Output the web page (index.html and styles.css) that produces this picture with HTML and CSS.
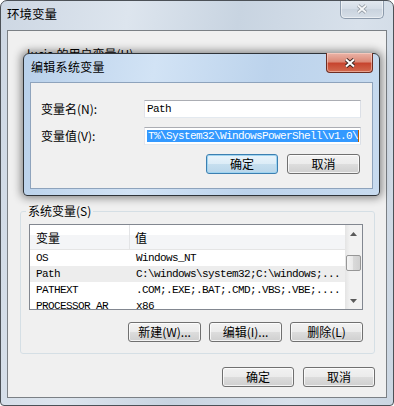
FILE: index.html
```html
<!DOCTYPE html>
<html lang="zh-CN">
<head>
  <meta charset="UTF-8">
  <title>环境变量</title>
  <link rel="stylesheet" href="styles.css">
</head>
<body>
  <div class="window">
    <div class="titlebar">
      <span class="title">环境变量</span>
      <span class="close">
        <svg width="12" height="10" viewBox="0 0 12 10"><path d="M2 1.5L10 8.5M10 1.5L2 8.5" stroke="#8b939c" stroke-width="3.6"/><path d="M2 1.5L10 8.5M10 1.5L2 8.5" stroke="#f4f6f8" stroke-width="2"/></svg>
      </span>
    </div>

    <div class="client">
      <div class="user-area">
        <div class="user-label">lucia 的用户变量(U)</div>
      </div>

      <fieldset class="group">
        <legend>系统变量(S)</legend>
        <div class="list">
          <div class="table">
            <div class="head">
              <div class="c1">变量</div>
              <div class="c2">值</div>
            </div>
            <div class="row"><div class="c1">OS</div><div class="c2">Windows_NT</div></div>
            <div class="row selected"><div class="c1">Path</div><div class="c2">C:\windows\system32;C:\windows;...</div></div>
            <div class="row"><div class="c1">PATHEXT</div><div class="c2">.COM;.EXE;.BAT;.CMD;.VBS;.VBE;....</div></div>
            <div class="row"><div class="c1">PROCESSOR_AR</div><div class="c2">x86</div></div>
          </div>
          <div class="scrollbar">
            <div class="arrow"><svg width="7" height="4" viewBox="0 0 7 4"><path d="M0 4L3.5 0L7 4Z" fill="#5a5a5a"/></svg></div>
            <div class="track"><div class="thumb"></div></div>
            <div class="arrow"><svg width="7" height="4" viewBox="0 0 7 4"><path d="M0 0L3.5 4L7 0Z" fill="#5a5a5a"/></svg></div>
          </div>
        </div>
        <div class="actions">
          <button class="btn">新建(W)...</button>
          <button class="btn">编辑(I)...</button>
          <button class="btn">删除(L)</button>
        </div>
      </fieldset>

      <div class="actions bottom">
        <button class="btn">确定</button>
        <button class="btn">取消</button>
      </div>
    </div>

    <!-- modal edit dialog over the main window -->
    <div class="dialog">
      <div class="titlebar dlg-titlebar">
        <span class="title dlg-title">编辑系统变量</span>
        <span class="close close-red">
          <svg width="12" height="10" viewBox="0 0 12 10"><path d="M2 1.5L10 8.5M10 1.5L2 8.5" stroke="#3a2420" stroke-width="3.8"/><path d="M2 1.5L10 8.5M10 1.5L2 8.5" stroke="#ffffff" stroke-width="2.1"/></svg>
        </span>
      </div>
      <div class="dlg-client">
        <div class="field">
          <label class="field-label">变量名(N):</label>
          <div class="input">Path</div>
        </div>
        <div class="field">
          <label class="field-label">变量值(V):</label>
          <div class="input"><span class="sel">T%\System32\WindowsPowerShell\v1.0\</span></div>
        </div>
        <div class="actions dlg-actions">
          <button class="btn default">确定</button>
          <button class="btn">取消</button>
        </div>
      </div>
    </div>
  </div>
</body>
</html>
```

FILE: styles.css
```css
* {
  box-sizing: border-box;
}
body {
  margin: 0;
  font-family: "Noto Sans CJK SC", sans-serif;
  font-size: 12px;
  color: #000;
}
.window {
  position: relative;
  width: 394px;
  height: 406px;
  border: 1px solid #4c5157;
  border-radius: 7px 7px 4px 4px;
  padding: 0 6px 7px 6px;
  display: flex;
  flex-direction: column;
  overflow: hidden;
  background: linear-gradient(100deg, #cdd7e3 0%, #dde5ee 28%, #c8d4e1 52%, #d8e1eb 78%, #cbd6e2 100%);
}
.titlebar {
  height: 29px;
  display: flex;
  align-items: flex-start;
  flex-shrink: 0;
}
.title {
  margin: 5px 0 0 0;
  font-size: 12.5px;
  line-height: 16px;
}
.close {
  margin: -1px 3px 0 auto;
  width: 44px;
  height: 19px;
  border: 1px solid #8c9aab;
  border-top: none;
  border-radius: 0 0 5px 5px;
  background: linear-gradient(#e3e9f0, #d3dce6 50%, #c9d3de 50%, #d6dee7);
  box-shadow: inset 0 0 0 1px rgba(255, 255, 255, 0.5);
  display: flex;
  align-items: center;
  justify-content: center;
}
.client {
  flex: 1;
  border: 1px solid #7b8085;
  background: #f0f0f0;
  display: flex;
  flex-direction: column;
  padding: 0 11px 10px 12px;
}
.user-area {
  height: 173px;
  padding: 16px 0 0 7px;
  flex-shrink: 0;
}
.user-label {
  line-height: 14px;
}
.group {
  margin: 0;
  min-width: 0;
  border: 1px solid #d5dfe5;
  border-radius: 3px;
  padding: 0 11px 11px 8px;
}
.group legend {
  padding: 0 2px;
  margin-left: -3px;
  line-height: 14px;
  font-size: 12px;
}
.list {
  margin-top: 6px;
  height: 86px;
  border: 1px solid #828790;
  background: #fff;
  display: flex;
}
.table {
  flex: 1;
  overflow: hidden;
}
.head {
  height: 25px;
  display: flex;
  border-bottom: 1px solid #e5e5e5;
  background: linear-gradient(#ffffff 0 42%, #f4f5f7 42%);
}
.head .c1 {
  width: 100px;
  padding: 6px 0 0 6px;
  border-right: 1px solid #e3e4e6;
  line-height: 14px;
}
.head .c2 {
  padding: 6px 0 0 5px;
  line-height: 14px;
}
.row {
  height: 16px;
  display: flex;
  font-family: "Liberation Mono", monospace;
  font-size: 11px;
  letter-spacing: -0.6px;
  line-height: 16px;
  white-space: nowrap;
}
.row .c1 {
  width: 100px;
  padding-left: 6px;
  overflow: hidden;
}
.row .c2 {
  padding-left: 6px;
}
.row.selected {
  background: #ededed;
}
.scrollbar {
  width: 17px;
  display: flex;
  flex-direction: column;
  background: linear-gradient(to right, #e4e4e4, #f2f2f2 30%, #f2f2f2);
}
.arrow {
  height: 17px;
  display: flex;
  align-items: center;
  justify-content: center;
}
.track {
  flex: 1;
}
.thumb {
  margin: 13px 0 0 1px;
  width: 15px;
  height: 16px;
  border: 1px solid #979797;
  border-radius: 2px;
  background: linear-gradient(to right, #f4f4f4, #e8e8e8 50%, #d9d9d9 50%, #d0d0d0);
}
.actions {
  display: flex;
  justify-content: flex-end;
  gap: 8px;
  margin-top: 12px;
}
.actions.bottom {
  margin-top: 13px;
  gap: 9px;
}
.actions.bottom .btn {
  width: 72px;
}
.btn {
  width: 73px;
  height: 20px;
  padding: 0;
  border: 1px solid #707070;
  border-radius: 3px;
  background: linear-gradient(#f2f2f2, #ebebeb 50%, #dddddd 50%, #cfcfcf);
  box-shadow: inset 0 0 0 1px rgba(255, 255, 255, 0.75);
  font-family: "Noto Sans CJK SC", sans-serif;
  font-size: 12px;
  line-height: 18px;
  color: #000;
  text-align: center;
}
.btn.default {
  border-color: #3c7fb1;
  background: linear-gradient(#eaf4fb, #dbecf7 50%, #c6dfef 50%, #b9d6ea);
  box-shadow: inset 0 0 0 1px #9fd4f0;
}
.dialog {
  position: absolute;
  left: 22px;
  top: 52px;
  width: 357px;
  height: 143px;
  border: 1px solid #2f3439;
  border-radius: 6px 6px 4px 4px;
  padding: 0 6px 6px 6px;
  display: flex;
  flex-direction: column;
  background: linear-gradient(100deg, #b8d0ea 0%, #d2e3f5 35%, #bcd3ec 65%, #c8dbef 100%);
  box-shadow: 0 0 9px 2px rgba(0, 0, 0, 0.45);
}
.dlg-titlebar {
  height: 28px;
}
.dlg-title {
  margin: 5px 0 0 1px;
  font-size: 12px;
  letter-spacing: 0.3px;
}
.close-red {
  margin: -1px 0 0 auto;
  width: 47px;
  height: 20px;
  border: 1px solid #6e2d22;
  border-top: none;
  border-radius: 0 0 4px 4px;
  background: linear-gradient(#eab4a8, #dc8a78 45%, #c7452f 55%, #d26a4f);
  box-shadow: inset 0 0 0 1px rgba(255, 220, 210, 0.5);
}
.dlg-client {
  flex: 1;
  border: 1px solid #8ea3bc;
  background: #f0f0f0;
  padding: 17px 11px 0 10px;
}
.field {
  display: flex;
  align-items: center;
  height: 18px;
  margin-bottom: 9px;
}
.field-label {
  width: 103px;
  line-height: 16px;
}
.input {
  flex: 1;
  height: 18px;
  border: 1px solid;
  border-color: #abadb3 #dbdfe6 #e3e9ef #e2e3ea;
  background: #fff;
  padding: 0 2px;
  font-family: "Liberation Mono", monospace;
  font-size: 11px;
  letter-spacing: -0.6px;
  line-height: 16px;
  white-space: nowrap;
  overflow: hidden;
}
.sel {
  background: #3399ff;
  color: #fff;
  padding-left: 1px;
  border-right: 1px solid #b85c00;
}
.dlg-actions {
  margin-top: 3px;
  margin-right: 1px;
  gap: 9px;
}
.dlg-actions .btn.default {
  width: 72px;
}
```
